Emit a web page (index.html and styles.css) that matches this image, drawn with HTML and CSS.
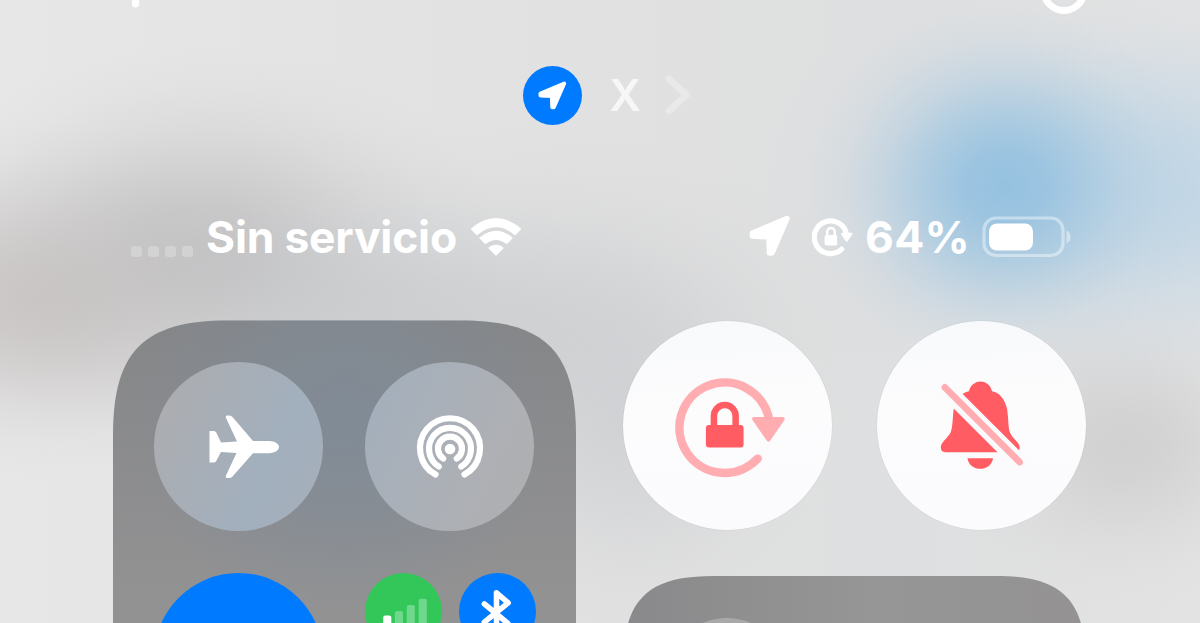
FILE: index.html
```html
<!DOCTYPE html>
<html lang="es">
<head>
<meta charset="utf-8">
<title>Centro de control</title>
<link rel="stylesheet" href="styles.css">
</head>
<body>
<svg class="defs" aria-hidden="true">
  <symbol id="location" viewBox="0 0 42 42"><path d="M38 3.500 23 38H20.500L20 22 3.500 21V18Z" fill="currentColor" stroke="currentColor" stroke-width="5.500" stroke-linejoin="round"/></symbol>
</svg>
<main class="screen">
  <header class="edge">
    <svg class="plus" viewBox="0 0 10 10"><path d="M4.500 0V4" stroke="#fff" stroke-width="7" stroke-linecap="round"/></svg>
    <svg class="power" viewBox="0 0 50 16"><circle cx="25" cy="-9.500" r="20" fill="none" stroke="#fff" stroke-width="7"/></svg>
  </header>

  <div class="activity">
    <span class="badge"><svg viewBox="0 0 42 42"><use href="#location"/></svg></span>
    <span class="app">X</span>
    <svg class="chevron" viewBox="0 0 26 40"><path d="M4 4 21.500 20 4 36" fill="none" stroke="#e9e9e9" stroke-width="6.500" stroke-linecap="round" stroke-linejoin="round"/></svg>
  </div>

  <div class="status">
    <div class="status-left">
      <span class="dots"><i></i><i></i><i></i><i></i></span>
      <span class="carrier">Sin servicio</span>
      <svg class="wifi" viewBox="0 0 52 40"><g fill="#fff" stroke="#fff" stroke-width="2" stroke-linejoin="round"><path d="M2 12Q26-8 50 12L45 17Q26 1.500 7 17Z"/><path d="M10.500 21Q26 8.500 41.500 21L36.500 26Q26 18 15.500 26Z"/><path d="M19.500 31Q26 26.500 32.500 31L26 37.500Z"/></g></svg>
    </div>
    <div class="status-right">
      <svg class="arrow" viewBox="0 0 42 42"><use href="#location"/></svg>
      <svg class="rotation" viewBox="0 0 40 38"><path d="M28.300 30.500A15.500 15.500 0 1 1 33 17" fill="none" stroke="#fff" stroke-width="5" stroke-linecap="round"/><path d="M28.500 16H37.500L33 22.500Z" fill="#fff" stroke="#fff" stroke-width="2" stroke-linejoin="round"/><rect x="12" y="17" width="12" height="10" rx="1.500" fill="#fff"/><path d="M14.500 18V14a3.600 3.600 0 0 1 7.200 0V18" fill="none" stroke="#fff" stroke-width="2.400"/></svg>
      <span class="percent">64%</span>
      <svg class="battery" viewBox="0 0 90 42"><rect x="2" y="2" width="79" height="37.500" rx="12" fill="none" stroke="#fff" stroke-opacity=".42" stroke-width="3.200"/><rect x="7" y="7.500" width="44" height="27" rx="8" fill="#fff"/><path d="M84.500 14.500Q88.500 16.500 88.500 21T84.500 27.500Z" fill="#fff" fill-opacity=".45"/></svg>
    </div>
  </div>

  <div class="modules">
    <section class="connectivity">
      <button class="toggle">
        <svg class="plane" viewBox="0 0 72 66"><path d="M1.500 17H5.500Q8 17 9 20L13 28.500 29 27.500 18 4Q17 1.500 19.500 1.500H21.500Q23 1.500 24.500 3L45 27H61C67 27 71 30 71 33S67 39 61 39.200H45L24.500 62.500Q23 64 21.500 64H19.500Q17 64 18 61.500L28.500 39 13 38 9 45.500Q8 48.500 5.500 48.500H1.500Z" fill="#fff"/></svg>
      </button>
      <button class="toggle">
        <svg class="airdrop" viewBox="0 0 72 66"><g fill="none" stroke="#fff" stroke-width="6.200" stroke-linecap="round"><path d="M21.500 59.500A30 30 0 1 1 50.500 59.500"/><path d="M24.700 51.500A21 21 0 1 1 47.300 51.500"/><path d="M29.200 43.500A12 12 0 1 1 42.800 43.500"/></g><circle cx="36" cy="34" r="5.300" fill="#fff"/></svg>
      </button>
      <button class="toggle toggle-blue"></button>
      <div class="small-toggles">
        <button class="mini mini-green">
          <svg viewBox="0 0 76 76"><rect x="18" y="42" width="8" height="12" rx="2" fill="#fff"/><g fill="#fff" fill-opacity=".3"><rect x="29.500" y="37.500" width="8" height="17" rx="2"/><rect x="41.200" y="31.500" width="8" height="23" rx="2"/><rect x="53" y="25.500" width="8" height="29" rx="2"/></g></svg>
        </button>
        <button class="mini mini-blue">
          <svg viewBox="0 0 76 76"><path d="M25 30.500 48 49.500 37 58.500V19.500L48.500 29.500 25 48.500" fill="none" stroke="#fff" stroke-width="5.500" stroke-linecap="round" stroke-linejoin="round"/></svg>
        </button>
      </div>
    </section>

    <div class="side">
      <div class="side-row">
        <button class="round">
          <svg viewBox="0 0 208 208"><path d="M134 137A45 45 0 1 1 145.500 98.500" fill="none" stroke="#ffadb1" stroke-width="8.500" stroke-linecap="round"/><path d="M130.500 97.500H159L144.800 118Z" fill="#ffadb1" stroke="#ffadb1" stroke-width="4" stroke-linejoin="round"/><rect x="82.500" y="103.500" width="37.500" height="22.500" rx="3" fill="#ff5c63"/><path d="M90.500 105V94.500a10.800 10.800 0 0 1 21.600 0V105" fill="none" stroke="#ff5c63" stroke-width="6.500"/></svg>
        </button>
        <button class="round">
          <svg viewBox="0 0 208 208"><path d="M68 130.500Q63.500 130.500 63.500 126C63.500 120.500 70 117.500 73.500 110.500 76 102.500 75 92.500 77 84.500 79 76.500 84 72 91.500 70 94.500 57 111.500 57 114.500 70 121.500 71 127 77.500 129.500 87.500 131 98.500 130.500 106.500 132.500 111.500 136 118.500 142 121 142 126Q142 130.500 137.500 130.500Z" fill="#ff5c63"/><path d="M90 136.500H115.500C113.500 150.500 92 150.500 90 136.500Z" fill="#ff5c63"/><path d="M61.500 60.500 147.500 146.500" stroke="#fbfbfd" stroke-width="16.500"/><path d="M67.500 66 142 140.500" stroke="#ffadb1" stroke-width="6.500" stroke-linecap="round"/></svg>
        </button>
      </div>
      <section class="media"><span class="artwork"></span></section>
    </div>
  </div>
</main>
</body>
</html>
```
FILE: styles.css
```css
* { box-sizing: border-box; }
body { margin: 0; overflow: hidden; font-family: Inter, "Liberation Sans", sans-serif; color: #fff; }
button { border: 0; padding: 0; margin: 0; }
svg { display: block; flex: none; }
.defs { display: none; }

.screen {
  width: 1200px;
  height: 623px;
  overflow: hidden;
  display: grid;
  grid-template-rows: 16px 158px 146px 1fr;
  background:
    radial-gradient(ellipse 200px 180px at 1005px 186px, rgba(141,190,224,.88) 0%, rgba(143,191,224,.79) 20%, rgba(147,193,224,.56) 40%, rgba(152,195,224,.28) 60%, rgba(157,197,224,.08) 80%, rgba(160,200,226,0) 100%),
    radial-gradient(ellipse 210px 210px at 1190px 190px, rgba(180,209,231,.65) 0%, rgba(180,209,231,.57) 20%, rgba(180,209,231,.39) 40%, rgba(180,209,231,.2) 60%, rgba(180,209,231,.06) 80%, rgba(180,209,231,0) 100%),
    radial-gradient(ellipse 260px 220px at 1020px 190px, rgba(175,205,228,.4) 0%, rgba(175,205,228,.24) 40%, rgba(175,205,228,.12) 60%, rgba(175,205,228,.04) 80%, rgba(175,205,228,0) 100%),
    radial-gradient(ellipse 260px 180px at 30px 300px, rgba(192,187,186,.7) 0%, rgba(192,187,186,.62) 20%, rgba(192,187,186,.43) 40%, rgba(192,187,186,.21) 60%, rgba(192,187,186,.06) 80%, rgba(192,187,186,0) 100%),
    radial-gradient(ellipse 300px 200px at 200px 245px, rgba(184,184,186,.68) 0%, rgba(184,184,186,.6) 20%, rgba(186,186,188,.42) 40%, rgba(188,188,190,.22) 60%, rgba(190,190,190,.07) 80%, rgba(190,190,190,0) 100%),
    radial-gradient(ellipse 480px 200px at 430px 320px, rgba(199,202,205,.75) 0%, rgba(199,202,205,.66) 20%, rgba(200,203,206,.45) 40%, rgba(202,204,207,.22) 60%, rgba(205,205,205,.07) 80%, rgba(205,205,205,0) 100%),
    radial-gradient(ellipse 200px 220px at 625px 420px, rgba(200,202,206,.6) 0%, rgba(200,202,206,.36) 40%, rgba(200,202,206,.18) 60%, rgba(205,205,205,.05) 80%, rgba(205,205,205,0) 100%),
    radial-gradient(ellipse 200px 160px at 1125px 445px, rgba(200,200,201,.65) 0%, rgba(200,200,201,.57) 20%, rgba(200,200,201,.39) 40%, rgba(200,200,201,.2) 60%, rgba(200,200,201,.06) 80%, rgba(205,205,205,0) 100%),
    linear-gradient(90deg, #e7e7e7, #e1e1e1 48%, #dedfe0 75%, #e3e3e3);
}

.edge { display: flex; justify-content: space-between; padding: 0 111px 0 131px; }
.plus { width: 10px; height: 10px; }
.power { width: 50px; height: 16px; }

.activity { display: flex; align-items: center; padding-left: 523px; }
.badge { width: 59px; height: 59px; border-radius: 50%; background: #007aff; display: flex; align-items: center; justify-content: center; }
.badge svg { width: 29px; height: 29px; }
.app { width: 28px; margin-left: 29px; font-size: 44px; line-height: 56px; font-weight: 600; color: #f7f7f7; display: flex; justify-content: center; }
.chevron { width: 26px; height: 40px; margin-left: 26px; }

.status { display: flex; justify-content: space-between; padding: 35px 128px 0 131px; height: 90px; }
.status-left, .status-right { display: flex; align-items: center; height: 56px; }
.dots { display: flex; gap: 6px; width: 62px; padding-top: 28px; }
.dots i { width: 11px; height: 11px; border-radius: 3px; background: rgba(255,255,255,.24); }
.carrier, .percent { font-size: 44.5px; line-height: 56px; font-weight: 650; white-space: nowrap; }
.carrier { width: 251px; margin-left: 13px; letter-spacing: -.25px; }
.wifi { width: 52px; height: 40px; margin-left: 13px; }
.arrow { width: 42px; height: 42px; margin: 0 1px 2px 0; }
.rotation { width: 42px; height: 40px; margin-left: 20px; }
.percent { width: 106px; margin-left: 11px; letter-spacing: .3px; }
.battery { width: 90px; height: 42px; margin-left: 11px; }

.modules { display: flex; gap: 47px; padding-left: 113px; }
.connectivity {
  width: 463px;
  height: 463px;
  padding: 42px 41px;
  display: grid;
  grid-template-columns: 170px 170px;
  grid-template-rows: 169px 169px;
  gap: 42px 41px;
  background:
    radial-gradient(ellipse 210px 190px at 230px 100px, rgba(126,139,153,.8) 0%, rgba(126,139,153,.5) 45%, rgba(140,142,145,0) 100%),
    linear-gradient(180deg, #858688, #929293 60%);
  clip-path: path("M0 463V115C0 31 31 0.500 115 0.500H348C432 0.500 463 31 463 115V463Z");
}
.toggle {
  border-radius: 50%;
  width: 169px;
  height: 169px;
  display: flex;
  align-items: center;
  justify-content: center;
  background: linear-gradient(115deg, #acadb0 10%, #a2afbd 65%, #a6afba 100%);
}
.toggle + .toggle { background: linear-gradient(115deg, #a2afbd, #acb0b6 55%, #afafb1 90%); }
.plane { width: 72px; height: 66px; margin-left: 10px; }
.airdrop { width: 72px; height: 66px; margin-top: 2px; }
.toggle + .toggle.toggle-blue { background: #007aff; }
.small-toggles { display: flex; gap: 17px; }
.mini { width: 77px; height: 77px; border-radius: 50%; }
.mini svg { width: 77px; height: 77px; }
.mini-green { background: #33c759; }
.mini-blue { background: #007aff; }

.side { width: 463px; display: flex; flex-direction: column; gap: 46px; padding-top: 1px; }
.side-row { display: flex; justify-content: space-between; }
.round { width: 209px; height: 209px; border-radius: 50%; background: linear-gradient(175deg, #f8f9fb, #fcfcfd 40%, #fbfbfd); box-shadow: 0 0 1px rgba(0,0,0,.2); }
.round svg { width: 209px; height: 209px; }
.media {
  height: 463px;
  padding: 42px;
  background: linear-gradient(90deg, #89898b, #969696 55%, #949292);
  clip-path: path("M0 463V90C0 24 24 0 90 0H373C439 0 463 24 463 90V463Z");
}
.artwork { display: block; width: 120px; height: 120px; margin-left: 2px; border-radius: 50%; background: #a9a9aa; }
```
